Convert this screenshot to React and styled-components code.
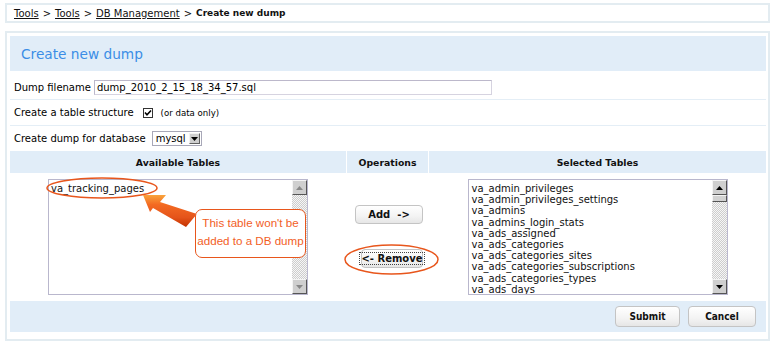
import React from "react";
import styled, { createGlobalStyle } from "styled-components";

const GlobalStyle = createGlobalStyle`
  html, body { margin: 0; padding: 0; background: #fff; }
  body { font-family: "DejaVu Sans", Verdana, sans-serif; font-size: 10px; color: #000; }
`;

const Page = styled.div`
  position: relative;
  width: 774px;
  height: 347px;
  padding: 3px 4px 0 5px;
  box-sizing: border-box;
`;

const Breadcrumb = styled.div`
  height: 20px;
  box-sizing: border-box;
  border: 2px solid #e3ecf1;
  padding-left: 7px;
  display: flex;
  align-items: center;
  gap: 4px;
  font-size: 10px;
  color: #111;
`;

const Crumb = styled.a`
  color: #111;
  text-decoration: underline;
`;

const Current = styled.b`
  font-weight: bold;
  font-size: 9px;
`;

const Panel = styled.div`
  margin-top: 8px;
  border: 2px solid #e3ecf1;
  padding: 3px 2px 7px 3px;
  display: flex;
  flex-direction: column;
`;

const TitleBand = styled.div`
  height: 35px;
  background: #e1edf8;
  display: flex;
  align-items: center;
  padding-left: 11px;
  font-size: 13.7px;
  color: #3b8de6;
`;

const FormRow = styled.div`
  height: ${(p) => p.$h}px;
  box-sizing: border-box;
  padding: ${(p) => p.$pt || 0}px 0 0 4px;
  display: flex;
  align-items: center;
  gap: 3px;
  border-bottom: ${(p) => (p.$last ? "none" : "1px solid #e4eef6")};
`;

const TextInput = styled.div`
  width: 398px;
  height: 15px;
  box-sizing: border-box;
  border: 1px solid #bcb8cb;
  border-right-color: #d6d3e0;
  border-bottom-color: #d6d3e0;
  padding-left: 2px;
  display: flex;
  align-items: center;
  font-size: 10px;
`;

const CheckBox = styled.span`
  display: inline-flex;
  width: 10px;
  height: 10px;
  margin-left: 6px;
  svg { display: block; }
`;

const Hint = styled.span`
  font-size: 8.6px;
  margin-left: 5px;
`;

const Select = styled.div`
  display: flex;
  align-items: center;
  height: 15px;
  box-sizing: border-box;
  border: 1px solid #a8a8b8;
  padding: 0 1px 0 3px;
  margin-left: 3px;
  gap: 3px;
  font-size: 10px;
`;

const SelectButton = styled.span`
  width: 11px;
  height: 11px;
  box-sizing: border-box;
  background: #cfcfcf;
  border: 1px solid;
  border-color: #f2f2f2 #606060 #606060 #f2f2f2;
  display: flex;
  align-items: center;
  justify-content: center;
`;

const Grid = styled.div`
  display: grid;
  grid-template-columns: 336px 81px 1fr;
  column-gap: 1px;
`;

const HeadCell = styled.div`
  height: 22px;
  background: #e1edf8;
  display: flex;
  align-items: center;
  justify-content: center;
  font-weight: bold;
  font-size: 9.3px;
  color: #111;
`;

const BodyCell = styled.div`
  height: 127px;
  box-sizing: border-box;
  padding-top: 6px;
  display: flex;
  justify-content: center;
  align-items: flex-start;
`;

const OpsCell = styled.div`
  height: 127px;
  box-sizing: border-box;
  padding: 32px 5px 0 0;
  display: flex;
  flex-direction: column;
  align-items: flex-end;
  gap: 25px;
`;

const ListBox = styled.div`
  width: 260px;
  height: 116px;
  box-sizing: border-box;
  border: 1px solid #b9b7cd;
  display: flex;
  background: #fff;
`;

const ListItems = styled.div`
  flex: 1;
  padding: 3px 0 0 ${(p) => p.$pl}px;
  font-size: 10px;
  line-height: 11.2px;
  white-space: nowrap;
  overflow: hidden;
  color: #111;
`;

const ScrollBar = styled.div`
  width: 15px;
  display: flex;
  flex-direction: column;
  background: repeating-conic-gradient(#cdcdcd 0% 25%, #f6f6f6 0% 50%) 0 0 / 2px 2px;
`;

const ScrollBtn = styled.div`
  width: 15px;
  height: 15px;
  box-sizing: border-box;
  background: #cfcfcf;
  border: 1px solid;
  border-color: #f4f4f4 #555 #555 #f4f4f4;
  display: flex;
  align-items: center;
  justify-content: center;
`;

const Thumb = styled.div`
  width: 15px;
  height: 7px;
  box-sizing: border-box;
  background: #d2d2d2;
  border: 1px solid;
  border-color: #f4f4f4 #555 #555 #f4f4f4;
`;

const Track = styled.div`
  flex: 1;
`;

const Button = styled.button`
  height: ${(p) => p.$h || 19}px;
  width: ${(p) => p.$w}px;
  padding: 0;
  border: 1px solid #c4c4c4;
  border-radius: 4px;
  background: linear-gradient(#ffffff, #f3f3f3 60%, #e6e6e6);
  font-family: ${(p) => (p.$narrow ? '"DejaVu Sans Condensed", "DejaVu Sans", sans-serif' : '"DejaVu Sans", sans-serif')};
  font-weight: bold;
  font-size: 10px;
  color: #111;
  display: flex;
  align-items: center;
  justify-content: center;
  white-space: pre;
`;

const Focus = styled.span`
  outline: 1px dotted #444;
  outline-offset: 0px;
  padding: 0 1px;
`;

const Footer = styled.div`
  margin-top: 1px;
  height: 31px;
  background: #e1edf8;
  display: flex;
  justify-content: flex-end;
  align-items: center;
  gap: 8px;
  padding-right: 10px;
`;

const Overlay = styled.svg`
  position: absolute;
  left: 0;
  top: 0;
  pointer-events: none;
`;

const Callout = styled.div`
  position: absolute;
  left: 195px;
  top: 209px;
  width: 111px;
  height: 49px;
  box-sizing: border-box;
  padding-bottom: 4px;
  border: 1.5px solid #e8561c;
  border-radius: 7px;
  background: #fff;
  display: flex;
  align-items: center;
  justify-content: center;
  text-align: center;
  font-family: "Liberation Sans", Arial, sans-serif;
  font-size: 11.6px;
  line-height: 18px;
  color: #f2601f;
`;

const Up = ({ c = "#000" }) => (
  <svg width="7" height="4" viewBox="0 0 7 4"><path d="M0 4 L3.5 0 L7 4 Z" fill={c} /></svg>
);
const Down = ({ c = "#000" }) => (
  <svg width="7" height="4" viewBox="0 0 7 4"><path d="M0 0 L3.5 4 L7 0 Z" fill={c} /></svg>
);

const selected = [
  "va_admin_privileges",
  "va_admin_privileges_settings",
  "va_admins",
  "va_admins_login_stats",
  "va_ads_assigned",
  "va_ads_categories",
  "va_ads_categories_sites",
  "va_ads_categories_subscriptions",
  "va_ads_categories_types",
  "va_ads_days",
];

export default function App() {
  return (
    <>
      <GlobalStyle />
      <Page>
        <Breadcrumb>
          <Crumb>Tools</Crumb>&gt;<Crumb>Tools</Crumb>&gt;<Crumb>DB Management</Crumb>&gt;
          <Current>Create new dump</Current>
        </Breadcrumb>
        <Panel>
          <TitleBand>Create new dump</TitleBand>
          <FormRow $h={29} $pt={4}>
            Dump filename
            <TextInput>dump_2010_2_15_18_34_57.sql</TextInput>
          </FormRow>
          <FormRow $h={26}>
            Create a table structure
            <CheckBox>
              <svg width="10" height="10" viewBox="0 0 10 10">
                <rect x="0.5" y="0.5" width="9" height="9" fill="#fff" stroke="#333" />
                <path d="M2 4.5 L4 6.8 L8 2.5" fill="none" stroke="#000" strokeWidth="1.6" />
              </svg>
            </CheckBox>
            <Hint>(or data only)</Hint>
          </FormRow>
          <FormRow $h={25} $last>
            Create dump for database
            <Select>
              mysql
              <SelectButton><Down /></SelectButton>
            </Select>
          </FormRow>
          <Grid>
            <HeadCell>Available Tables</HeadCell>
            <HeadCell>Operations</HeadCell>
            <HeadCell>Selected Tables</HeadCell>
            <BodyCell>
              <ListBox>
                <ListItems $pl={2}>
                  <div>va_tracking_pages</div>
                </ListItems>
                <ScrollBar>
                  <ScrollBtn><Up c="#888" /></ScrollBtn>
                  <Track />
                  <ScrollBtn><Down c="#888" /></ScrollBtn>
                </ScrollBar>
              </ListBox>
            </BodyCell>
            <OpsCell>
              <Button $w={68}>{"Add  ->"}</Button>
              <Button $w={62}><Focus>{"<- Remove"}</Focus></Button>
            </OpsCell>
            <BodyCell>
              <ListBox>
                <ListItems $pl={3}>
                  {selected.map((s) => (
                    <div key={s}>{s}</div>
                  ))}
                </ListItems>
                <ScrollBar>
                  <ScrollBtn><Up /></ScrollBtn>
                  <Thumb />
                  <Track />
                  <ScrollBtn><Down /></ScrollBtn>
                </ScrollBar>
              </ListBox>
            </BodyCell>
          </Grid>
          <Footer>
            <Button $w={65} $h={21} $narrow>Submit</Button>
            <Button $w={68} $h={21} $narrow>Cancel</Button>
          </Footer>
        </Panel>
        <Overlay width="774" height="347" viewBox="0 0 774 347">
          <defs>
            <linearGradient id="arrowGrad" x1="0" y1="0" x2="0" y2="1">
              <stop offset="0" stopColor="#f9a43c" />
              <stop offset="0.3" stopColor="#f36a22" />
              <stop offset="0.7" stopColor="#e5541a" />
              <stop offset="1" stopColor="#c23200" />
            </linearGradient>
          </defs>
          <ellipse cx="102" cy="188" rx="55" ry="10" fill="none" stroke="#e8561c" strokeWidth="1.5" />
          <ellipse cx="391.5" cy="259.5" rx="46.5" ry="14.5" fill="none" stroke="#e8561c" strokeWidth="1.5" />
          <polygon
            points="143,195 166,195 160,202 197,214 186,227 153,208 150,212"
            fill="url(#arrowGrad)"
          />
        </Overlay>
        <Callout>
          This table won't be
          <br />
          added to a DB dump
        </Callout>
      </Page>
    </>
  );
}
